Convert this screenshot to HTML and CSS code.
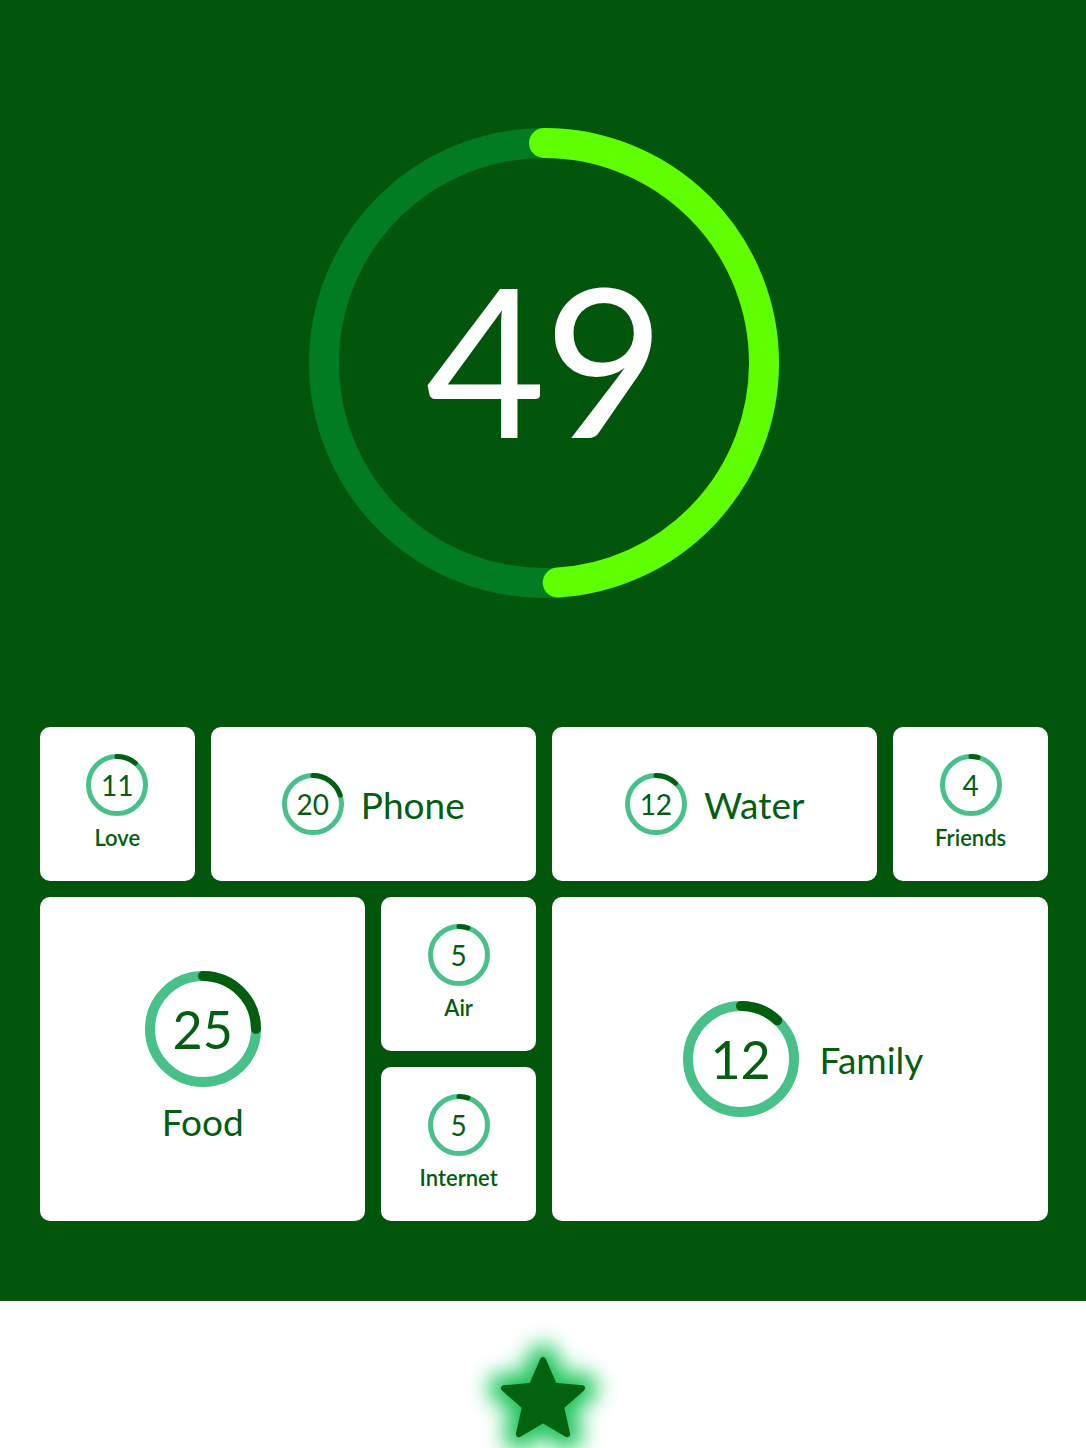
FILE: index.html
```html
<!DOCTYPE html>
<html>
<head>
    <title>Life Score</title>
    <link rel="stylesheet" href="styles.css">
</head>
<body>
    <div class="screen">
        <div class="gauge">
            <svg class="gauge-ring" width="470" height="470" viewBox="0 0 470 470">
                <circle class="gauge-track" cx="235" cy="235" r="220"></circle>
                <circle class="gauge-value" cx="235" cy="235" r="220" pathLength="100" stroke-dasharray="49 100" transform="rotate(-90 235 235)"></circle>
            </svg>
            <div class="gauge-number">49</div>
        </div>

        <div class="tiles">
            <div class="tile tile-love">
                <div class="ring ring-sm">
                    <svg width="62" height="62" viewBox="0 0 62 62">
                        <circle class="ring-track" cx="31" cy="31" r="28.5"></circle>
                        <circle class="ring-value" cx="31" cy="31" r="28.5" pathLength="100" stroke-dasharray="11 100" transform="rotate(-90 31 31)"></circle>
                    </svg>
                    <span>11</span>
                </div>
                <div class="label-sm">Love</div>
            </div>

            <div class="tile tile-phone tile-row">
                <div class="ring ring-sm">
                    <svg width="62" height="62" viewBox="0 0 62 62">
                        <circle class="ring-track" cx="31" cy="31" r="28.5"></circle>
                        <circle class="ring-value" cx="31" cy="31" r="28.5" pathLength="100" stroke-dasharray="20 100" transform="rotate(-90 31 31)"></circle>
                    </svg>
                    <span>20</span>
                </div>
                <div class="label-md">Phone</div>
            </div>

            <div class="tile tile-water tile-row">
                <div class="ring ring-sm">
                    <svg width="62" height="62" viewBox="0 0 62 62">
                        <circle class="ring-track" cx="31" cy="31" r="28.5"></circle>
                        <circle class="ring-value" cx="31" cy="31" r="28.5" pathLength="100" stroke-dasharray="12 100" transform="rotate(-90 31 31)"></circle>
                    </svg>
                    <span>12</span>
                </div>
                <div class="label-md">Water</div>
            </div>

            <div class="tile tile-friends">
                <div class="ring ring-sm">
                    <svg width="62" height="62" viewBox="0 0 62 62">
                        <circle class="ring-track" cx="31" cy="31" r="28.5"></circle>
                        <circle class="ring-value" cx="31" cy="31" r="28.5" pathLength="100" stroke-dasharray="4 100" transform="rotate(-90 31 31)"></circle>
                    </svg>
                    <span>4</span>
                </div>
                <div class="label-sm">Friends</div>
            </div>

            <div class="tile tile-food">
                <div class="ring ring-lg">
                    <svg width="116" height="116" viewBox="0 0 116 116">
                        <circle class="ring-track" cx="58" cy="58" r="53"></circle>
                        <circle class="ring-value" cx="58" cy="58" r="53" pathLength="100" stroke-dasharray="25 100" transform="rotate(-90 58 58)"></circle>
                    </svg>
                    <span>25</span>
                </div>
                <div class="label-md">Food</div>
            </div>

            <div class="tile tile-air">
                <div class="ring ring-sm">
                    <svg width="62" height="62" viewBox="0 0 62 62">
                        <circle class="ring-track" cx="31" cy="31" r="28.5"></circle>
                        <circle class="ring-value" cx="31" cy="31" r="28.5" pathLength="100" stroke-dasharray="5 100" transform="rotate(-90 31 31)"></circle>
                    </svg>
                    <span>5</span>
                </div>
                <div class="label-sm">Air</div>
            </div>

            <div class="tile tile-internet">
                <div class="ring ring-sm">
                    <svg width="62" height="62" viewBox="0 0 62 62">
                        <circle class="ring-track" cx="31" cy="31" r="28.5"></circle>
                        <circle class="ring-value" cx="31" cy="31" r="28.5" pathLength="100" stroke-dasharray="5 100" transform="rotate(-90 31 31)"></circle>
                    </svg>
                    <span>5</span>
                </div>
                <div class="label-sm">Internet</div>
            </div>

            <div class="tile tile-family tile-row">
                <div class="ring ring-lg">
                    <svg width="116" height="116" viewBox="0 0 116 116">
                        <circle class="ring-track" cx="58" cy="58" r="53"></circle>
                        <circle class="ring-value" cx="58" cy="58" r="53" pathLength="100" stroke-dasharray="12 100" transform="rotate(-90 58 58)"></circle>
                    </svg>
                    <span>12</span>
                </div>
                <div class="label-md">Family</div>
            </div>
        </div>
    </div>

    <div class="dock">
        <svg class="star" width="160" height="160" viewBox="0 0 160 160">
            <defs>
                <filter id="glow" x="-50%" y="-50%" width="200%" height="200%">
                    <feGaussianBlur stdDeviation="9"></feGaussianBlur>
                </filter>
                <path id="starShape" d="M80 39 L91.17 64.63 L118.99 67.33 L98.07 85.87 L104.1 113.17 L80 99 L55.9 113.17 L61.93 85.87 L41.01 67.33 L68.83 64.63 Z"></path>
            </defs>
            <use href="#starShape" class="star-halo" filter="url(#glow)"></use>
            <use href="#starShape" class="star-glow" filter="url(#glow)"></use>
            <use href="#starShape" class="star-body"></use>
        </svg>
    </div>
</body>
</html>
```

FILE: styles.css
```css
body {
    margin: 0;
    font-family: Lato, "Open Sans", sans-serif;
    background-color: #fff;
}

.screen {
    background-color: #02560c;
    padding: 128px 38px 80px 40px;
}

.gauge {
    width: 470px;
    height: 470px;
    margin: 0 auto;
    display: grid;
    place-items: center;
}

.gauge-ring,
.gauge-number {
    grid-area: 1 / 1;
}

.gauge-track {
    fill: none;
    stroke: #027c23;
    stroke-width: 30;
}

.gauge-value {
    fill: none;
    stroke: #5ffe00;
    stroke-width: 30;
    stroke-linecap: round;
}

.gauge-number {
    color: #fff;
    font-size: 208px;
    line-height: 1;
    margin-top: -10px;
    letter-spacing: -2px;
}

.tiles {
    margin-top: 129px;
    display: grid;
    grid-template-columns: repeat(6, 1fr);
    grid-auto-rows: 154px;
    gap: 16px;
}

.tile {
    background-color: #fff;
    border-radius: 10px;
    display: flex;
    flex-direction: column;
    align-items: center;
    justify-content: center;
    color: #035e10;
}

.tile-row {
    flex-direction: row;
}

.tile-love { grid-column: 1; grid-row: 1; }
.tile-phone { grid-column: 2 / 4; grid-row: 1; gap: 17px; }
.tile-water { grid-column: 4 / 6; grid-row: 1; gap: 17px; }
.tile-friends { grid-column: 6; grid-row: 1; }
.tile-food { grid-column: 1 / 3; grid-row: 2 / 4; }
.tile-air { grid-column: 3; grid-row: 2; }
.tile-internet { grid-column: 3; grid-row: 3; }
.tile-family { grid-column: 4 / 7; grid-row: 2 / 4; gap: 21px; padding-left: 6px; }

.tile-love,
.tile-friends,
.tile-air,
.tile-internet {
    padding-bottom: 4px;
}

.tile-food {
    padding-bottom: 4px;
}

.ring {
    display: grid;
    place-items: center;
}

.ring svg,
.ring span {
    grid-area: 1 / 1;
}

.ring-track {
    fill: none;
    stroke: #48c08a;
}

.ring-value {
    fill: none;
    stroke: #035e10;
    stroke-linecap: round;
}

.ring-sm .ring-track,
.ring-sm .ring-value {
    stroke-width: 5;
}

.ring-lg .ring-track,
.ring-lg .ring-value {
    stroke-width: 10;
}

.ring-sm span {
    font-size: 28px;
    line-height: 1;
}

.ring-lg span {
    font-size: 52px;
    line-height: 1;
}

.label-sm {
    font-size: 22px;
    font-weight: 600;
    margin-top: 8px;
}

.label-md {
    font-size: 37px;
}

.tile-food .label-md {
    margin-top: 12px;
}

.dock {
    height: 147px;
    display: flex;
    justify-content: center;
    align-items: flex-start;
    padding-top: 20px;
    box-sizing: border-box;
    overflow: hidden;
}

.star-halo {
    fill: #b4f2cd;
    stroke: #b4f2cd;
    stroke-width: 44;
    stroke-linejoin: round;
}

.star-glow {
    fill: #21c25a;
    stroke: #21c25a;
    stroke-width: 22;
    stroke-linejoin: round;
}

.star-body {
    fill: #03620f;
    stroke: #03620f;
    stroke-width: 6;
    stroke-linejoin: round;
}
```
